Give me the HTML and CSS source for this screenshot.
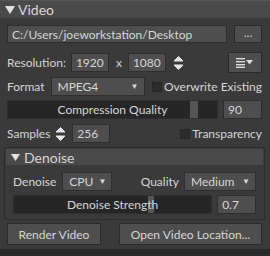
FILE: index.html
```html
<!DOCTYPE html>
<html lang="en">
<head>
	<meta charset="UTF-8">
	<title>Video</title>
	<link rel="stylesheet" href="styles.css">
</head>
<body>
	<div class="panel">
		<div class="head"><svg class="tri" width="10" height="8" viewBox="0 0 10 8"><path d="M0 0 L10 0 L5 8 Z" fill="#e0e0e0"/></svg>Video</div>
		<div class="content">
			<div class="row path-row">
				<div class="field path">C:/Users/joeworkstation/Desktop</div>
				<div class="btn dots">...</div>
			</div>
			<div class="row res-row">
				<span class="label">Resolution:</span>
				<div class="field num">1920</div>
				<span class="times">x</span>
				<div class="field num">1080</div>
				<svg class="spin" width="11" height="16" viewBox="0 0 11 16"><path d="M5.5 1.5 L10 6 L1 6 Z M1 10 L10 10 L5.5 14.5 Z" fill="#e6e6e6" stroke="#e6e6e6" stroke-width="1" stroke-linejoin="round"/></svg>
				<div class="grow"></div>
				<div class="btn menu">
					<svg width="18" height="10" viewBox="0 0 18 10"><rect x="0" y="0" width="9" height="1.4" fill="#ddd"/><rect x="0" y="3" width="9" height="1.4" fill="#ddd"/><rect x="0" y="6" width="9" height="1.4" fill="#ddd"/><rect x="0" y="8.6" width="9" height="1.4" fill="#ddd"/><path d="M10 2 L17 2 L13.5 6.5 Z" fill="#ddd"/></svg>
				</div>
			</div>
			<div class="row fmt-row">
				<span class="label">Format</span>
				<div class="field select fmt">MPEG4<span class="arrow">&#9660;</span></div>
				<div class="grow"></div>
				<span class="check"></span><span class="label">Overwrite Existing</span>
			</div>
			<div class="row slider-row">
				<div class="slider">
					<span class="slabel">Compression Quality</span>
					<span class="handle" style="left: 182px"></span>
				</div>
				<div class="field val">90</div>
			</div>
			<div class="row samples-row">
				<span class="label">Samples</span>
				<svg class="spin" width="11" height="16" viewBox="0 0 11 16"><path d="M5.5 1.5 L10 6 L1 6 Z M1 10 L10 10 L5.5 14.5 Z" fill="#e6e6e6" stroke="#e6e6e6" stroke-width="1" stroke-linejoin="round"/></svg>
				<div class="field num">256</div>
				<div class="grow"></div>
				<span class="check"></span><span class="label">Transparency</span>
			</div>
			<div class="group">
				<div class="ghead"><svg class="tri small" width="9" height="7" viewBox="0 0 9 7"><path d="M0 0 L9 0 L4.5 7 Z" fill="#e0e0e0"/></svg>Denoise</div>
				<div class="row dn-row">
					<span class="label">Denoise</span>
					<div class="field select cpu">CPU<span class="arrow">&#9660;</span></div>
					<div class="grow"></div>
					<span class="label">Quality</span>
					<div class="field select med">Medium<span class="arrow">&#9660;</span></div>
				</div>
				<div class="row slider-row strength">
					<div class="slider">
						<span class="slabel">Denoise Strength</span>
						<span class="handle thin" style="left: 134px"></span>
					</div>
					<div class="field val">0.7</div>
				</div>
			</div>
			<div class="row btn-row">
				<div class="btn big render">Render Video</div>
				<div class="btn big open">Open Video Location...</div>
			</div>
		</div>
	</div>
</body>
</html>
```

FILE: styles.css
```css
body {
	margin: 0;
	background: #2b2b2b;
	font-family: Lato, "Open Sans", sans-serif;
	font-size: 12px;
	color: #d6d6d6;
}

.panel {
	width: 270px;
	height: 250px;
	background: #3a3a3a;
	border-bottom: 1px solid #2a2a2a;
	box-sizing: border-box;
}

.head {
	height: 17px;
	background: #4a4a4a;
	border-top: 1px solid #555;
	display: flex;
	align-items: center;
	font-size: 14px;
	line-height: 17px;
	padding-left: 5px;
}

.tri {
	margin-right: 3px;
}

.tri.small {
	margin-right: 4px;
}

.content {
	padding: 0 8px 0 7px;
}

.row {
	display: flex;
	align-items: center;
	white-space: nowrap;
}

.grow {
	flex: 1;
}

.field {
	height: 19px;
	box-sizing: border-box;
	background: #4e4e4e;
	border: 1px solid #2e2e2e;
	line-height: 17px;
	padding-left: 4px;
	white-space: nowrap;
}

.btn {
	box-sizing: border-box;
	background: #4e4e4e;
	border: 1px solid #2a2a2a;
	display: flex;
	align-items: center;
	justify-content: center;
}

.path-row {
	margin-top: 7px;
}

.path {
	width: 220px;
	height: 18px;
	font-size: 12px;
	padding-left: 4px;
}

.dots {
	width: 28px;
	height: 18px;
	margin-left: 7px;
	padding-bottom: 4px;
}

.res-row {
	margin-top: 9px;
}

.num {
	width: 38px;
}

.res-row .label {
	margin-right: 5px;
}

.times {
	margin: 0 6px 0 7px;
}

.spin {
	margin-left: 7px;
}

.menu {
	width: 34px;
	height: 21px;
}

.fmt-row {
	margin-top: 4px;
}

.fmt-row .label:first-child {
	margin-right: 6px;
}

.select {
	position: relative;
	padding-left: 6px;
}

.arrow {
	position: absolute;
	right: 5px;
	font-size: 8px;
}

.fmt {
	width: 94px;
}

.check {
	width: 10px;
	height: 10px;
	box-sizing: border-box;
	background: #2c2c2c;
	border: 1px solid #262626;
	margin: 0 2px 0 6px;
}

.slider-row {
	margin-top: 4px;
}

.slider {
	position: relative;
	width: 211px;
	height: 19px;
	box-sizing: border-box;
	background: #262626;
	border: 1px solid #2e2e2e;
	display: flex;
	justify-content: center;
	align-items: center;
	font-size: 12px;
}

.slabel {
	position: relative;
	z-index: 1;
}

.handle {
	position: absolute;
	top: 0;
	width: 8px;
	height: 17px;
	background: #555;
}

.handle.thin {
	width: 6px;
}

.val {
	width: 39px;
	margin-left: 5px;
}

.samples-row {
	margin-top: 5px;
}

.samples-row .spin {
	margin: 0 6px 0 5px;
}

.group {
	margin: 4px -3px 0 -3px;
	border: 1px solid #2c2c2c;
	padding: 1px 1px 5px 1px;
}

.ghead {
	height: 16px;
	background: #4a4a4a;
	display: flex;
	align-items: center;
	padding-left: 5px;
	font-size: 14px;
}

.dn-row {
	margin-top: 7px;
	padding: 0 7px 0 7px;
}

.dn-row .label:first-child {
	margin-right: 6px;
}

.cpu {
	width: 50px;
}

.dn-row .label {
	margin-right: 5px;
}

.med {
	width: 72px;
}

.strength {
	padding: 0 7px 0 7px;
}

.strength .slider {
	width: 200px;
}

.btn-row {
	margin-top: 3px;
	justify-content: space-between;
}

.big {
	height: 22px;
	font-size: 12px;
}

.render {
	width: 94px;
}

.open {
	width: 143px;
}
```
